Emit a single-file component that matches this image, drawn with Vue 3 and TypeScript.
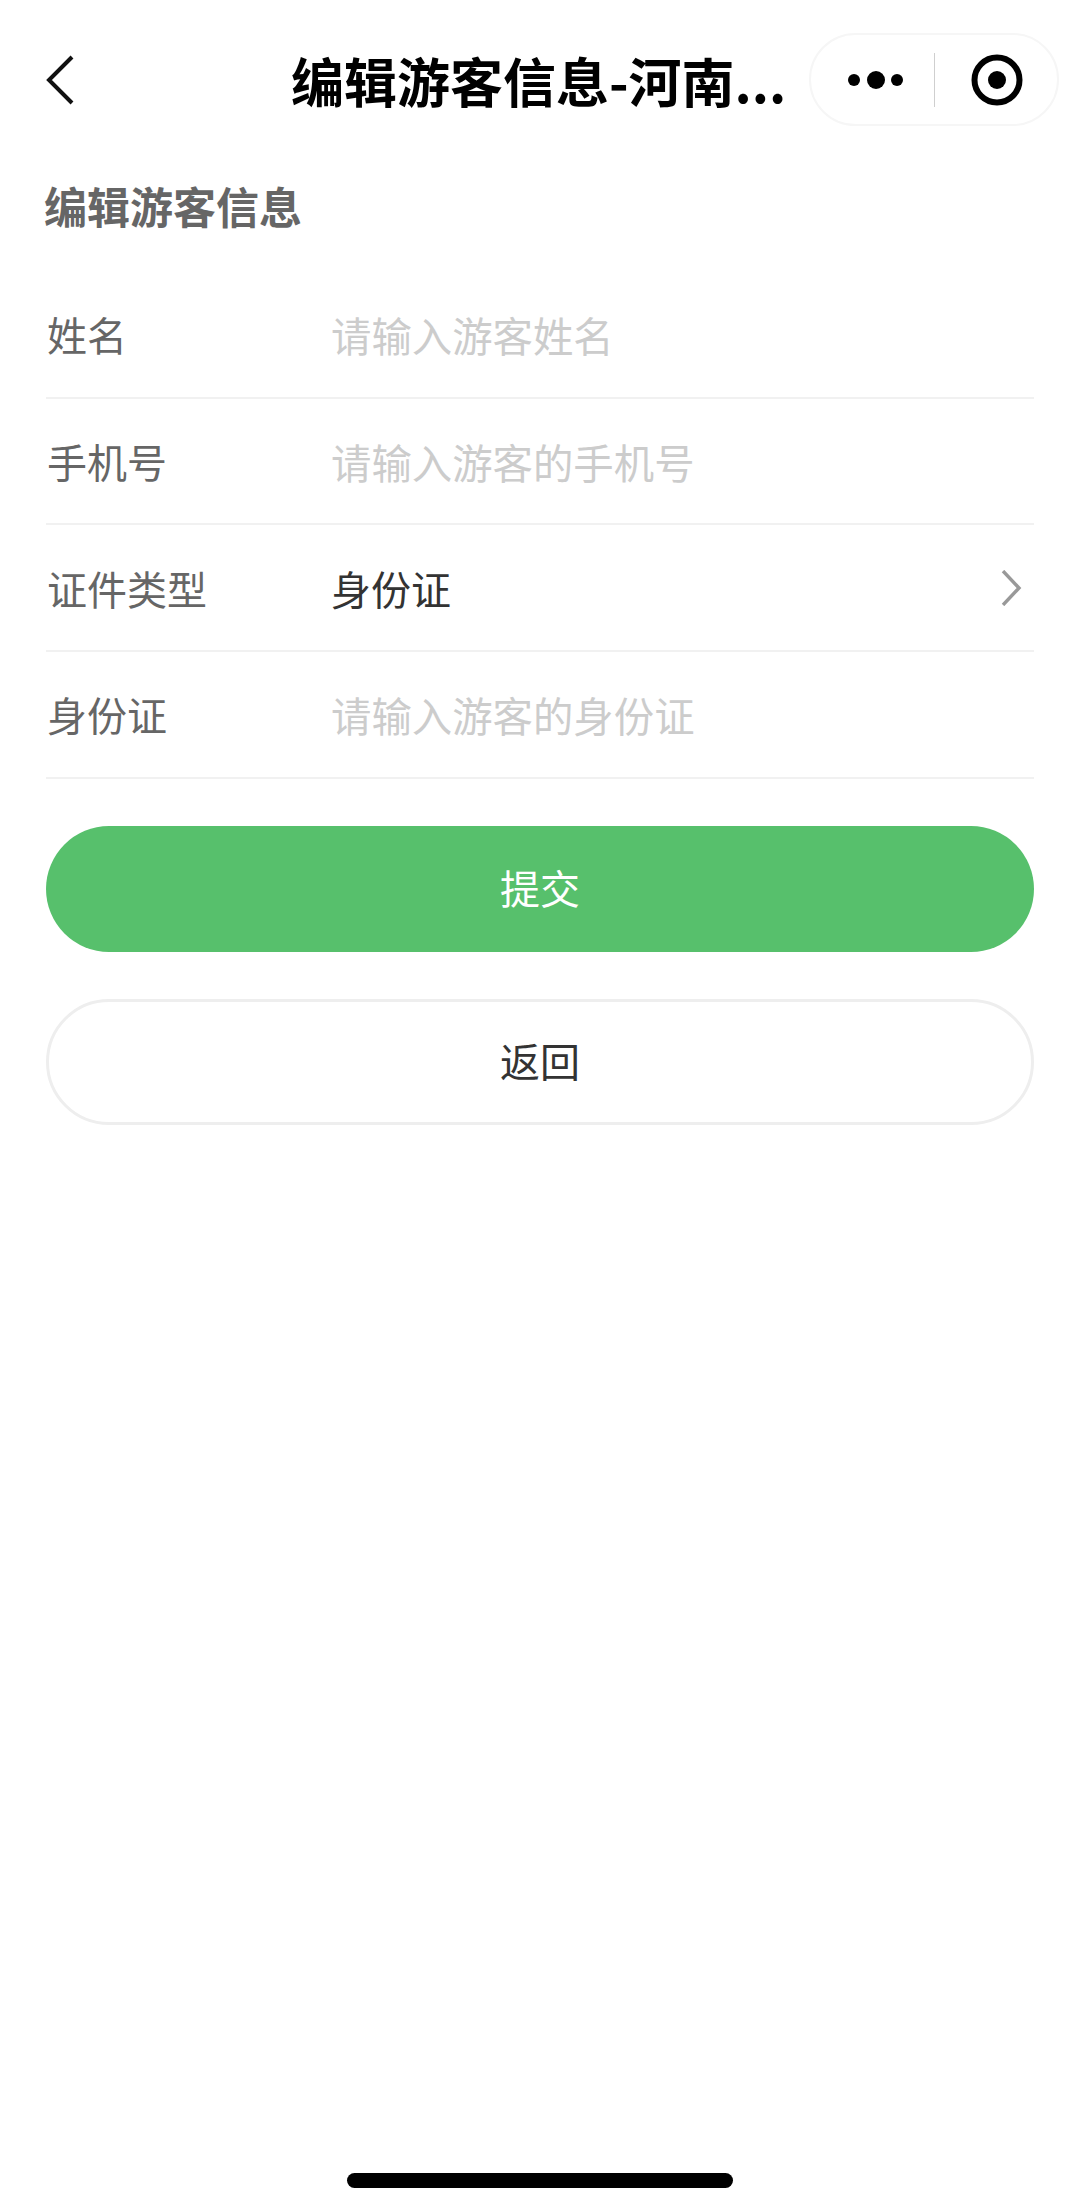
<script setup lang="ts">
interface Field {
  label: string
  placeholder?: string
  value?: string
  arrow?: boolean
}

const fields: Field[] = [
  { label: '姓名', placeholder: '请输入游客姓名' },
  { label: '手机号', placeholder: '请输入游客的手机号' },
  { label: '证件类型', value: '身份证', arrow: true },
  { label: '身份证', placeholder: '请输入游客的身份证' }
]
</script>

<template>
  <div class="page">
    <header class="nav">
      <svg class="back" width="30" height="50" viewBox="0 0 30 50">
        <path d="M27 2 L4 25 L27 48" fill="none" stroke="#111" stroke-width="4" />
      </svg>
      <div class="nav-title">编辑游客信息-河南...</div>
      <div class="capsule">
        <svg class="more" width="66" height="20" viewBox="0 0 66 20">
          <circle cx="6" cy="10" r="6" />
          <circle cx="28" cy="10" r="9" />
          <circle cx="49" cy="10" r="6" />
        </svg>
        <span class="divider"></span>
        <svg class="target" width="52" height="52" viewBox="0 0 52 52">
          <circle cx="26" cy="26" r="22.5" fill="none" stroke="#000" stroke-width="6" />
          <circle cx="26" cy="26" r="9" />
        </svg>
      </div>
    </header>

    <main class="content">
      <h1 class="heading">编辑游客信息</h1>

      <div class="form">
        <div v-for="field in fields" :key="field.label" class="row">
          <span class="label">{{ field.label }}</span>
          <span v-if="field.value" class="value">{{ field.value }}</span>
          <span v-else class="placeholder">{{ field.placeholder }}</span>
          <svg v-if="field.arrow" class="arrow" width="22" height="36" viewBox="0 0 22 36">
            <path d="M3 1 L19 18 L3 35" fill="none" stroke="#999" stroke-width="3.4" />
          </svg>
        </div>
      </div>

      <button class="btn primary">提交</button>
      <button class="btn plain">返回</button>
    </main>

    <div class="home-bar"></div>
  </div>
</template>

<style>
html,
body {
  margin: 0;
  background: #fff;
}
</style>

<style scoped>
.page {
  width: 1080px;
  height: 2211px;
  display: flex;
  flex-direction: column;
  background: #fff;
  font-family: 'Noto Sans CJK SC', 'Noto Sans', sans-serif;
}
.nav {
  display: flex;
  align-items: center;
  height: 93px;
  padding: 33px 21px 0 45px;
}
.back {
  flex: none;
}
.nav-title {
  flex: 1;
  padding-left: 216px;
  font-size: 53px;
  font-weight: 700;
  line-height: 92px;
  color: #000;
  white-space: nowrap;
}
.capsule {
  flex: none;
  box-sizing: border-box;
  width: 250px;
  height: 93px;
  display: flex;
  align-items: center;
  border: 2px solid #f6f6f6;
  border-radius: 47px;
  background: #fff;
}
.more {
  margin-left: 37px;
  flex: none;
}
.divider {
  width: 1px;
  height: 54px;
  margin-left: 20px;
  background: #cfcfcf;
}
.target {
  margin-left: 36px;
  flex: none;
}
.content {
  padding: 0 46px;
}
.heading {
  margin: 47px 0 0;
  margin-left: -2px;
  font-size: 43px;
  line-height: 64px;
  font-weight: 700;
  color: #666;
}
.form {
  margin-top: 35px;
}
.row {
  box-sizing: border-box;
  height: 126.7px;
  display: flex;
  align-items: center;
  border-bottom: 2px solid #f1f1f1;
  font-size: 40px;
}
.label {
  width: 284px;
  padding-left: 1px;
  color: #666;
}
.value {
  flex: 1;
  color: #333;
}
.placeholder {
  flex: 1;
  font-size: 40.4px;
  color: #ccc;
}
.arrow {
  flex: none;
  margin-right: 12px;
}
.btn {
  display: block;
  box-sizing: border-box;
  width: 988px;
  height: 126px;
  padding: 0 0 4px;
  border-radius: 63px;
  font-family: inherit;
  font-size: 40px;
}
.primary {
  margin-top: 47px;
  border: none;
  background: #57c06c;
  color: #fff;
}
.plain {
  margin-top: 47px;
  border: 3px solid #eeeeee;
  background: #fff;
  color: #333;
}
.home-bar {
  width: 386px;
  height: 15px;
  margin: auto auto 23px;
  border-radius: 8px;
  background: #000;
}
</style>
